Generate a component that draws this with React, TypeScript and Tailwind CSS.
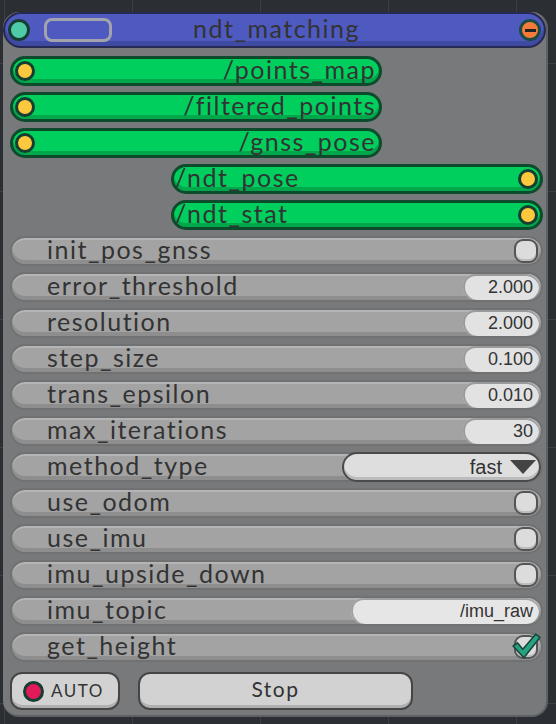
import React from "react";

const LABEL_FONT = "font-['Lato','Noto_Sans',sans-serif] tracking-[1.5px]";
const NUM_FONT = "font-['Liberation_Sans',Arial,sans-serif]";

function Dot({ className }: { className: string }) {
  return <div className={`h-[20px] w-[20px] shrink-0 rounded-full border-[3px] border-[#173d31] ${className}`} />;
}

function TopicIn({ name }: { name: string }) {
  return (
    <div className="flex h-[30px] w-[372px] items-center rounded-full border-[3px] border-[#0e4a2c] bg-[#00cf5e] pl-[2px] pr-[3px] shadow-[inset_0_-4px_0_#00a84c]">
      <Dot className="bg-[#fcc83e]" />
      <span className={`-mt-[3px] ml-auto text-[25px] leading-none text-[#333] ${LABEL_FONT}`}>{name}</span>
    </div>
  );
}

function TopicOut({ name }: { name: string }) {
  return (
    <div className="flex h-[30px] w-[372px] items-center self-end rounded-full border-[3px] border-[#0e4a2c] bg-[#00cf5e] pl-[1px] pr-[2px] shadow-[inset_0_-4px_0_#00a84c]">
      <span className={`-mt-[3px] text-[25px] leading-none text-[#333] ${LABEL_FONT}`}>{name}</span>
      <Dot className="ml-auto bg-[#fcc83e]" />
    </div>
  );
}

function Row({ label, children }: { label: string; children?: React.ReactNode }) {
  return (
    <div className="flex h-[30px] w-full items-center rounded-full border-2 border-[#6f7173] bg-[#a3a3a3] pl-[35px] pr-[2px] shadow-[inset_0_2px_0_#b4b4b4,inset_0_-4px_0_#8e8e8e]">
      <span className={`-mt-[4px] text-[25px] leading-none text-[#333] ${LABEL_FONT}`}>{label}</span>
      <div className="ml-auto flex items-center">{children}</div>
    </div>
  );
}

function Check() {
  return <div className="mr-[1px] h-[24px] w-[24px] rounded-[9px] border-2 border-[#555] bg-[#dcdcdc] shadow-[inset_0_-2px_0_#bdbdbd]" />;
}

function Num({ v }: { v: string }) {
  return (
    <div className={`flex h-[26px] w-[76px] items-center justify-end rounded-full bg-[#e2e2e2] pr-[6px] text-[18px] text-[#333] shadow-[inset_0_2px_0_#9a9a9a,inset_2px_0_0_#9a9a9a] ${NUM_FONT}`}>
      {v}
    </div>
  );
}

export default function App() {
  const nums: [string, string][] = [
    ["error_threshold", "2.000"],
    ["resolution", "2.000"],
    ["step_size", "0.100"],
    ["trans_epsilon", "0.010"],
    ["max_iterations", "30"],
  ];
  return (
    <div className="relative h-[724px] w-[556px] overflow-hidden bg-[#2b2f34] bg-[linear-gradient(to_right,#3b4047_1px,transparent_1px),linear-gradient(to_bottom,#3b4047_1px,transparent_1px)] bg-[size:128px_128px] bg-[position:4px_63px] pl-[3px] pt-[12px]">
      <div className="flex w-[545px] flex-col rounded-[16px] border-r-2 border-b-2 border-[#5e6164] bg-[#7b7d80]/95">
        <div className="flex h-[36px] items-center rounded-full border-2 border-[#262a50] bg-[#4e5ac0] pl-[3px] pr-[3px] shadow-[inset_0_-5px_0_#3f4aa2]">
          <Dot className="h-[22px] w-[22px] bg-[#4ecaa7]" />
          <div className="ml-[14px] h-[24px] w-[68px] rounded-[8px] border-[3px] border-[#a3a3ad]" />
          <span className={`-mt-[3px] flex-1 pr-[78px] text-center text-[25px] leading-none text-[#333] ${LABEL_FONT}`}>ndt_matching</span>
          <div className="flex h-[22px] w-[22px] items-center justify-center rounded-full border-[3px] border-[#1b4b44] bg-[#f47b39]">
            <div className="h-[3px] w-[11px] bg-[#222]" />
          </div>
        </div>
        <div className="flex flex-col gap-[6px] pl-[7px] pr-[3px] pt-[8px]">
          <TopicIn name="/points_map" />
          <TopicIn name="/filtered_points" />
          <TopicIn name="/gnss_pose" />
          <TopicOut name="/ndt_pose" />
          <TopicOut name="/ndt_stat" />
          <Row label="init_pos_gnss"><Check /></Row>
          {nums.map(([l, v]) => (
            <Row key={l} label={l}><Num v={v} /></Row>
          ))}
          <Row label="method_type">
            <div className={`-mr-[2px] flex h-[30px] w-[199px] items-center justify-end gap-[7px] rounded-full border-2 border-[#4a4a4a] bg-[#dedede] pr-[2px] text-[20px] text-[#333] shadow-[inset_0_-3px_0_#bcbcbc] ${NUM_FONT}`}>
              fast
              <svg width="28" height="16" viewBox="0 0 28 16"><path d="M1 1 H27 L14 15 Z" fill="#444" /></svg>
            </div>
          </Row>
          <Row label="use_odom"><Check /></Row>
          <Row label="use_imu"><Check /></Row>
          <Row label="imu_upside_down"><Check /></Row>
          <Row label="imu_topic">
            <div className={`flex h-[26px] w-[188px] items-center justify-end rounded-full bg-[#e6e6e6] pr-[6px] text-[18px] text-[#333] shadow-[inset_0_2px_0_#a0a0a0,inset_2px_0_0_#a0a0a0] ${NUM_FONT}`}>
              /imu_raw
            </div>
          </Row>
          <Row label="get_height">
            <div className="relative">
              <Check />
              <svg className="absolute -right-[2px] -top-[4px]" width="30" height="30" viewBox="0 0 28 28">
                <path d="M2 14 L6 11 L11 17 L23 3 L27 6 L12 25 Z" fill="#27a283" stroke="#1c463c" strokeWidth="1.5" strokeLinejoin="round" />
              </svg>
            </div>
          </Row>
          <div className="mb-[5px] mt-[4px] flex gap-[18px]">
            <div className="flex h-[38px] w-[110px] items-center gap-[7px] rounded-[12px] border-2 border-[#454545] bg-[#d2d2d2] pl-[11px] shadow-[inset_0_-3px_0_#b0b0b0]">
              <Dot className="h-[21px] w-[21px] bg-[#e11a5a]" />
              <span className={`text-[17px] text-[#333] ${LABEL_FONT} tracking-[0.5px]`}>AUTO</span>
            </div>
            <div className={`flex h-[38px] w-[275px] items-center justify-center rounded-[12px] border-2 border-[#454545] bg-[#d2d2d2] pb-[4px] text-[21px] text-[#333] shadow-[inset_0_-3px_0_#b0b0b0] ${LABEL_FONT}`}>
              Stop
            </div>
          </div>
        </div>
      </div>
    </div>
  );
}
